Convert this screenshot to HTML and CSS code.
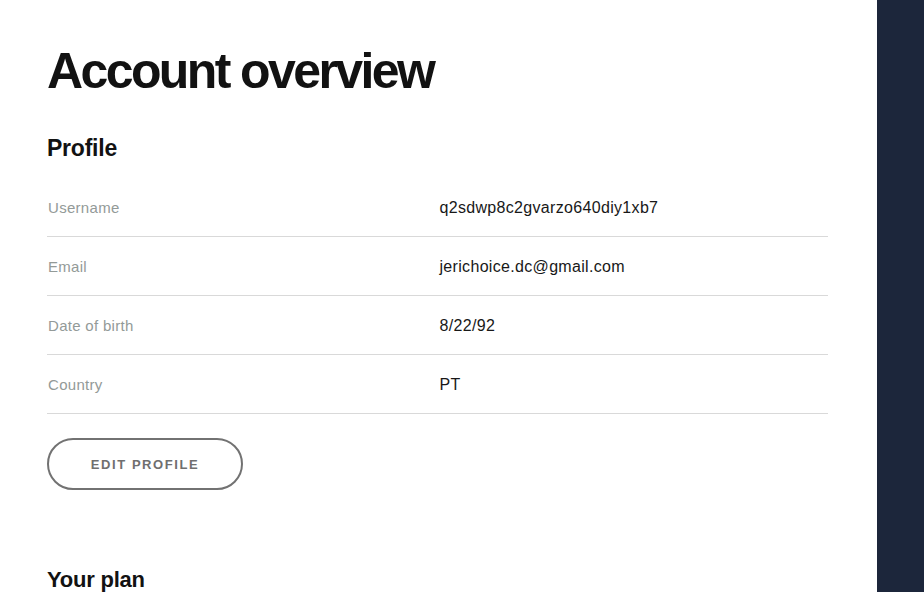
FILE: index.html
```html
<!DOCTYPE html>
<html lang="en">
<head>
<meta charset="utf-8">
<title>Account overview</title>
<link rel="stylesheet" href="styles.css">
</head>
<body>
<div class="page">
  <main class="main">
    <h1 class="title">Account overview</h1>
    <section class="section">
      <h2 class="heading">Profile</h2>
      <dl class="table">
        <div class="row"><dt class="label">Username</dt><dd class="value">q2sdwp8c2gvarzo640diy1xb7</dd></div>
        <div class="row"><dt class="label">Email</dt><dd class="value">jerichoice.dc@gmail.com</dd></div>
        <div class="row"><dt class="label">Date of birth</dt><dd class="value">8/22/92</dd></div>
        <div class="row"><dt class="label">Country</dt><dd class="value">PT</dd></div>
      </dl>
      <button class="btn" type="button">Edit profile</button>
    </section>
    <section class="section plan">
      <h2 class="heading heading-plan">Your plan</h2>
    </section>
  </main>
  <aside class="side"></aside>
</div>
</body>
</html>
```
FILE: styles.css
```css
html, body {
  margin: 0;
  padding: 0;
  height: 100%;
  overflow: hidden;
  background: #ffffff;
  font-family: "Liberation Sans", Arial, sans-serif;
  color: #181818;
}
.page {
  display: flex;
  height: 592px;
}
.main {
  flex: 1;
  padding: 41px 49px 0 47px;
  box-sizing: border-box;
}
.side {
  width: 47px;
  background: #1c263b;
}
.title {
  margin: 0;
  font-size: 50px;
  line-height: 60px;
  font-weight: 700;
  letter-spacing: -0.052em;
  color: #121212;
}
.section {
  margin-top: 33px;
}
.heading {
  margin: 0;
  font-size: 23px;
  line-height: 28px;
  font-weight: 700;
  letter-spacing: -0.01em;
  color: #121212;
}
.heading-plan {
  font-size: 22px;
}
.table {
  margin: 16px 0 0;
}
.row {
  display: grid;
  grid-template-columns: 1fr 1fr;
  align-items: center;
  height: 58px;
  border-bottom: 1px solid #d9d9d9;
}
.label, .value {
  margin: 0;
  font-size: 15px;
  line-height: 20px;
  padding-top: 1px;
}
.label {
  padding-left: 1px;
  letter-spacing: 0.02em;
  color: #939a98;
}
.value {
  padding-left: 2px;
  font-size: 16px;
  letter-spacing: 0.02em;
  color: #181818;
}
.btn {
  margin-top: 24px;
  width: 196px;
  height: 52px;
  border: 2px solid #727272;
  border-radius: 26px;
  background: #fff;
  font-family: "Liberation Sans", Arial, sans-serif;
  font-size: 13px;
  font-weight: 700;
  letter-spacing: 0.12em;
  text-transform: uppercase;
  color: #6f6f6f;
  padding: 0;
}
.plan {
  margin-top: 76px;
}
```
